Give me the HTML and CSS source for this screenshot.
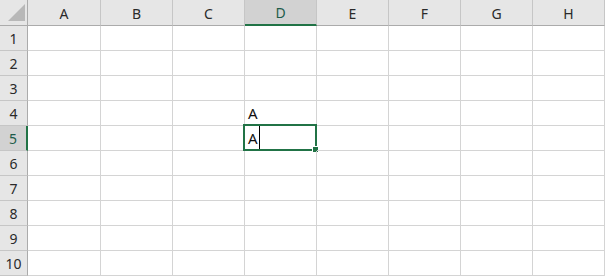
FILE: index.html
```html
<!DOCTYPE html>
<html lang="ja">
<head>
    <meta charset="UTF-8">
    <meta name="viewport" content="width=device-width, initial-scale=1.0">
    <title>Sheet1</title>
    <link rel="stylesheet" href="styles.css">
</head>
<body>
    <div class="sheet">
        <!-- 見出し行 -->
        <div class="corner">
            <svg class="corner-mark" width="17" height="17" viewBox="0 0 17 17">
                <polygon points="17,0 17,17 0,17" fill="#b8b8b8"/>
            </svg>
        </div>
        <div class="col-head">A</div>
        <div class="col-head">B</div>
        <div class="col-head">C</div>
        <div class="col-head active">D</div>
        <div class="col-head">E</div>
        <div class="col-head">F</div>
        <div class="col-head">G</div>
        <div class="col-head">H</div>

        <div class="row-head">1</div>
        <div class="cell"></div><div class="cell"></div><div class="cell"></div><div class="cell"></div>
        <div class="cell"></div><div class="cell"></div><div class="cell"></div><div class="cell"></div>

        <div class="row-head">2</div>
        <div class="cell"></div><div class="cell"></div><div class="cell"></div><div class="cell"></div>
        <div class="cell"></div><div class="cell"></div><div class="cell"></div><div class="cell"></div>

        <div class="row-head">3</div>
        <div class="cell"></div><div class="cell"></div><div class="cell"></div><div class="cell"></div>
        <div class="cell"></div><div class="cell"></div><div class="cell"></div><div class="cell"></div>

        <div class="row-head">4</div>
        <div class="cell"></div><div class="cell"></div><div class="cell"></div><div class="cell">A</div>
        <div class="cell"></div><div class="cell"></div><div class="cell"></div><div class="cell"></div>

        <div class="row-head active">5</div>
        <div class="cell"></div><div class="cell"></div><div class="cell"></div>
        <div class="cell editing">
            A<span class="caret"></span>
            <div class="selection"></div>
            <div class="fill-handle"></div>
        </div>
        <div class="cell"></div><div class="cell"></div><div class="cell"></div><div class="cell"></div>

        <div class="row-head">6</div>
        <div class="cell"></div><div class="cell"></div><div class="cell"></div><div class="cell"></div>
        <div class="cell"></div><div class="cell"></div><div class="cell"></div><div class="cell"></div>

        <div class="row-head">7</div>
        <div class="cell"></div><div class="cell"></div><div class="cell"></div><div class="cell"></div>
        <div class="cell"></div><div class="cell"></div><div class="cell"></div><div class="cell"></div>

        <div class="row-head">8</div>
        <div class="cell"></div><div class="cell"></div><div class="cell"></div><div class="cell"></div>
        <div class="cell"></div><div class="cell"></div><div class="cell"></div><div class="cell"></div>

        <div class="row-head">9</div>
        <div class="cell"></div><div class="cell"></div><div class="cell"></div><div class="cell"></div>
        <div class="cell"></div><div class="cell"></div><div class="cell"></div><div class="cell"></div>

        <div class="row-head">10</div>
        <div class="cell"></div><div class="cell"></div><div class="cell"></div><div class="cell"></div>
        <div class="cell"></div><div class="cell"></div><div class="cell"></div><div class="cell"></div>
    </div>
</body>
</html>
```

FILE: styles.css
```css
* {
    margin: 0;
    padding: 0;
    box-sizing: border-box;
}

body {
    font-family: "Noto Sans", "Noto Sans CJK JP", sans-serif;
    background: #ffffff;
    overflow: hidden;
}

.sheet {
    display: grid;
    grid-template-columns: 28px 73px repeat(7, 72px);
    grid-template-rows: 26px repeat(10, 25px);
    width: 605px;
}

.corner {
    background: #e6e6e6;
    border-right: 1px solid #ababab;
    border-bottom: 1px solid #ababab;
    display: flex;
    align-items: flex-end;
    justify-content: flex-end;
    padding: 0 2px 4px 0;
}

.corner-mark {
    display: block;
}

.col-head {
    background: #e6e6e6;
    border-right: 1px solid #c6c6c6;
    border-bottom: 1px solid #ababab;
    color: #2a2a2a;
    font-size: 14px;
    display: flex;
    align-items: center;
    justify-content: center;
    padding-top: 1px;
}

.col-head.active {
    background: #d2d2d2;
    color: #1e5c4a;
    border-bottom: 2px solid #217346;
}

.row-head {
    background: #e6e6e6;
    border-right: 1px solid #ababab;
    border-bottom: 1px solid #c6c6c6;
    color: #2a2a2a;
    font-size: 14px;
    display: flex;
    align-items: center;
    justify-content: center;
}

.row-head.active {
    background: #d2d2d2;
    color: #1e5c4a;
    border-right: 2px solid #217346;
}

.cell {
    position: relative;
    border-right: 1px solid #d4d4d4;
    border-bottom: 1px solid #d4d4d4;
    font-size: 15px;
    color: #111;
    display: flex;
    align-items: flex-end;
    padding: 0 0 2px 3px;
    line-height: 20px;
}

.caret {
    display: inline-block;
    width: 1px;
    height: 23px;
    background: #000;
    margin: 0 0 -1px 1px;
}

.selection {
    position: absolute;
    left: -2px;
    top: -2px;
    right: -1px;
    bottom: -1px;
    border: 2px solid #217346;
    pointer-events: none;
}

.fill-handle {
    position: absolute;
    right: -2px;
    bottom: -2px;
    width: 6px;
    height: 6px;
    background: #217346;
    border-top: 1px solid #fff;
    border-left: 1px solid #fff;
}
```
